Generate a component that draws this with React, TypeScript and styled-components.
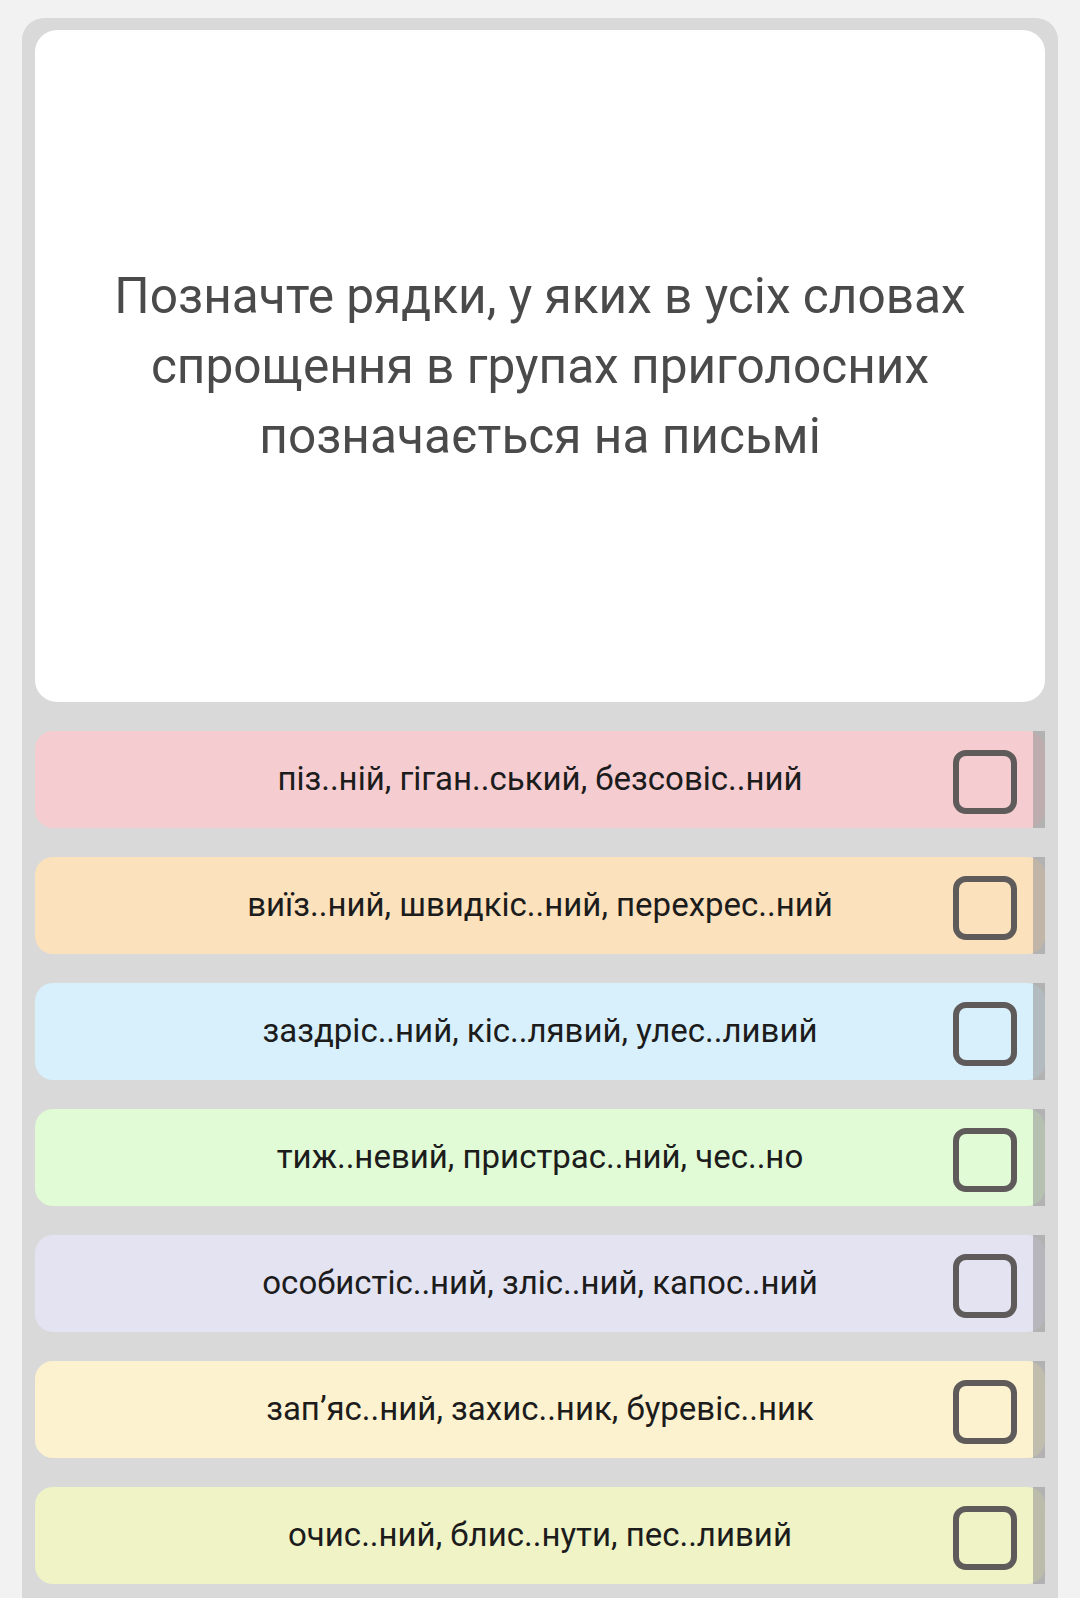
import styled, { createGlobalStyle } from "styled-components";

const GlobalStyle = createGlobalStyle`
  html, body {
    margin: 0;
    padding: 0;
    background: #f2f2f2;
  }
  body {
    font-family: Roboto, "Noto Sans", "Liberation Sans", sans-serif;
  }
`;

const options = [
  { id: 1, text: "піз..ній, гіган..ський, безсовіс..ний", color: "#f5ccd0" },
  { id: 2, text: "виїз..ний, швидкіс..ний, перехрес..ний", color: "#fbe1bc" },
  { id: 3, text: "заздріс..ний, кіс..лявий, улес..ливий", color: "#d8f0fb" },
  { id: 4, text: "тиж..невий, пристрас..ний, чес..но", color: "#e0fbd5" },
  { id: 5, text: "особистіс..ний, зліс..ний, капос..ний", color: "#e3e3f1" },
  { id: 6, text: "зап’яс..ний, захис..ник, буревіс..ник", color: "#fdf2cf" },
  { id: 7, text: "очис..ний, блис..нути, пес..ливий", color: "#eff3c6" },
];

const App = (): JSX.Element => {
  return (
    <>
      <GlobalStyle />
      <Page>
        <Panel>
          <QuestionCard>
            <Question>
              Позначте рядки, у яких в усіх словах спрощення в групах
              приголосних позначається на письмі
            </Question>
          </QuestionCard>
          <OptionList>
            {options.map((item) => (
              <OptionRow key={item.id} $bg={item.color}>
                <Spacer />
                <OptionText>{item.text}</OptionText>
                <CheckBox />
              </OptionRow>
            ))}
          </OptionList>
        </Panel>
      </Page>
    </>
  );
};

const Page = styled.div`
  padding: 18px 22px 0 22px;
  height: 1598px;
  box-sizing: border-box;
  overflow: hidden;
`;

const Panel = styled.div`
  background: #d9d9d9;
  border-radius: 22px;
  padding: 12px 13px 40px 13px;
`;

const QuestionCard = styled.div`
  background: #ffffff;
  border-radius: 22px;
  height: 672px;
  display: flex;
  align-items: center;
  justify-content: center;
  padding: 0 60px;
  box-sizing: border-box;
`;

const Question = styled.div`
  font-size: 49.6px;
  line-height: 70px;
  color: #4a4a4a;
  text-align: center;
  margin-top: 0;
`;

const OptionList = styled.div`
  display: flex;
  flex-direction: column;
  gap: 29px;
  padding-top: 29px;
`;

const OptionRow = styled.div<{ $bg: string }>`
  position: relative;
  display: flex;
  align-items: center;
  height: 97px;
  padding: 0 28px;
  background: ${(p) => p.$bg};
  border-radius: 18px;

  &::after {
    content: "";
    position: absolute;
    top: 0;
    right: 0;
    bottom: 0;
    width: 12px;
    background: rgba(150, 150, 150, 0.58);
  }
`;

const Spacer = styled.div`
  width: 64px;
  flex: none;
`;

const OptionText = styled.div`
  flex: 1;
  text-align: center;
  font-size: 33px;
  color: #1c1c1c;
  margin-top: -2px;
`;

const CheckBox = styled.div`
  width: 64px;
  height: 64px;
  box-sizing: border-box;
  border: 6px solid #5f5b5b;
  border-radius: 13px;
  flex: none;
  margin-top: 4px;
`;

export default App;
